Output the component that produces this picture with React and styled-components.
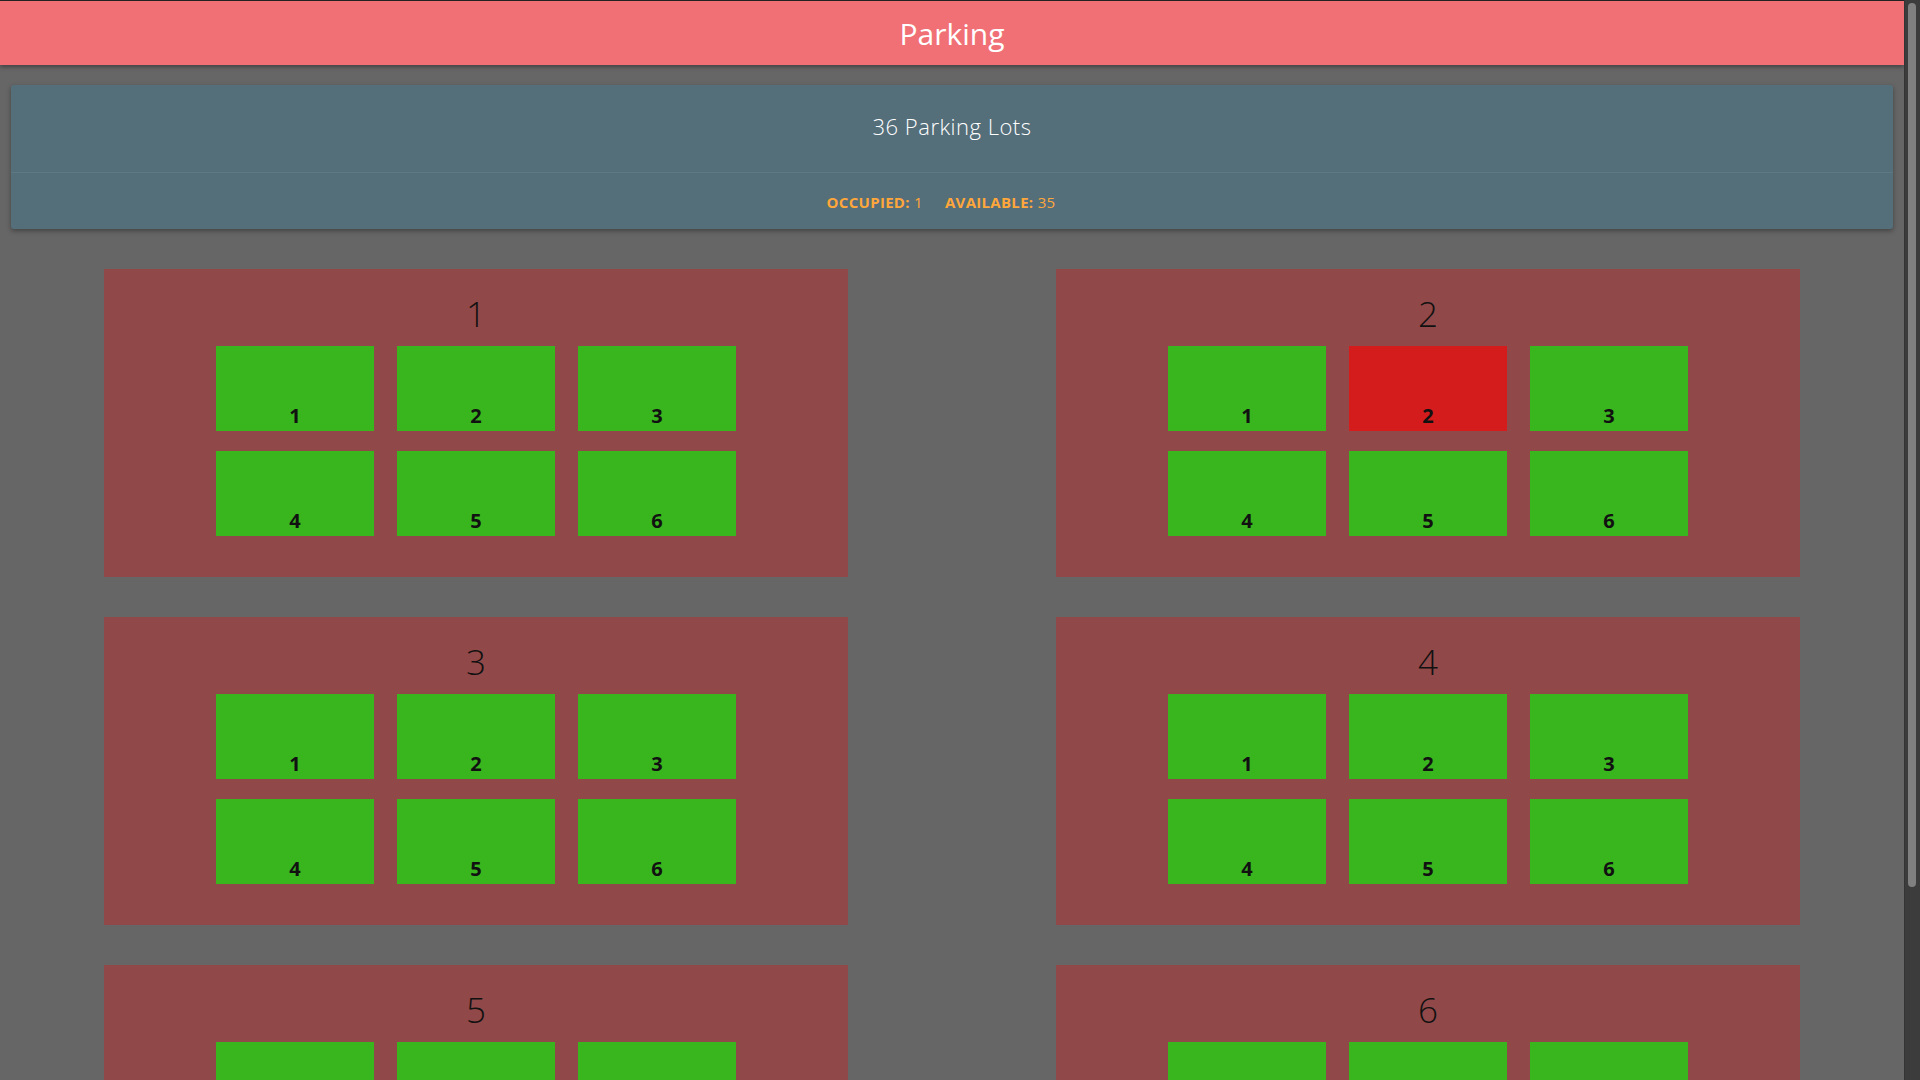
import React from "react";
import styled, { createGlobalStyle } from "styled-components";

const GlobalStyle = createGlobalStyle`
html, body {
  margin: 0;
  padding: 0;
  background: #666666;
  font-family: "Open Sans", "Noto Sans", sans-serif;
}
`;

const Page = styled.div`
margin-right: 16px;
`;

// headless shots have no native scrollbar, so draw the one the page shows
const ScrollTrack = styled.div`
position: fixed;
top: 0;
right: 0;
width: 16px;
height: 100vh;
background: #3c3c3c;
border-left: 1px solid #343434;
box-sizing: border-box;
z-index: 5;
`;

const ScrollThumb = styled.div`
margin: 3px 0 0 3px;
width: 8px;
height: 884px;
border-radius: 4px;
background: #808080;
`;

const Header = styled.header`
height: 64px;
border-top: 1px solid #222;
background: #f07076;
box-shadow: 0 2px 4px rgba(0,0,0,0.35);
display: flex;
align-items: center;
justify-content: center;
color: #fff;
font-size: 30px;
font-weight: 400;
position: relative;
z-index: 1;
`;

const Info = styled.section`
margin: 20px 11px 0;
background: #546e7a;
border-radius: 3px;
box-shadow: 0 2px 5px rgba(0,0,0,0.35);
`;

const InfoTitle = styled.div`
height: 88px;
display: flex;
align-items: center;
justify-content: center;
color: #fff;
font-size: 22px;
letter-spacing: 0.5px;
font-weight: 300;
border-bottom: 1px solid #5e7884;
box-sizing: border-box;
padding-bottom: 6px;
`;

const Stats = styled.div`
height: 56px;
display: flex;
align-items: center;
justify-content: center;
padding-top: 2px;
box-sizing: border-box;
`;

const Stat = styled.span`
color: #ffa73a;
font-size: 15px;
letter-spacing: 0.3px;
margin-right: 22px;
b {
  font-weight: 700;
}
`;

const LotGrid = styled.main`
display: grid;
grid-template-columns: 1fr 1fr;
row-gap: 40px;
padding: 40px 0 40px;
`;

const Lot = styled.div`
width: 744px;
justify-self: center;
background: #914848;
padding: 27px 0 41px;
box-sizing: border-box;
display: flex;
flex-direction: column;
align-items: center;
`;

const LotTitle = styled.h2`
margin: 0 0 15px;
font-size: 35px;
line-height: 35px;
font-weight: 300;
color: #111;
`;

const Spots = styled.div`
display: grid;
grid-template-columns: repeat(3, 158px);
grid-auto-rows: 85px;
column-gap: 23px;
row-gap: 20px;
`;

const Spot = styled.div`
background: ${(p) => (p.$occupied ? "#d41c1d" : "#39b51e")};
display: flex;
align-items: flex-end;
justify-content: center;
padding-bottom: 5px;
box-sizing: border-box;
font-size: 20px;
line-height: 20px;
font-weight: 700;
color: #111;
`;

const lots = [1, 2, 3, 4, 5, 6].map((id) => ({
  id,
  spots: [1, 2, 3, 4, 5, 6].map((n) => ({ n, occupied: id === 2 && n === 2 })),
}));

export default function App() {
  const all = lots.flatMap((l) => l.spots);
  const occupied = all.filter((s) => s.occupied).length;
  return (
    <>
      <GlobalStyle />
      <Page>
        <Header>Parking</Header>
        <Info>
          <InfoTitle>{all.length} Parking Lots</InfoTitle>
          <Stats>
            <Stat>
              <b>OCCUPIED:</b> {occupied}
            </Stat>
            <Stat>
              <b>AVAILABLE:</b> {all.length - occupied}
            </Stat>
          </Stats>
        </Info>
        <LotGrid>
          {lots.map((lot) => (
            <Lot key={lot.id}>
              <LotTitle>{lot.id}</LotTitle>
              <Spots>
                {lot.spots.map((s) => (
                  <Spot key={s.n} $occupied={s.occupied}>
                    {s.n}
                  </Spot>
                ))}
              </Spots>
            </Lot>
          ))}
        </LotGrid>
      </Page>
      <ScrollTrack>
        <ScrollThumb />
      </ScrollTrack>
    </>
  );
}
